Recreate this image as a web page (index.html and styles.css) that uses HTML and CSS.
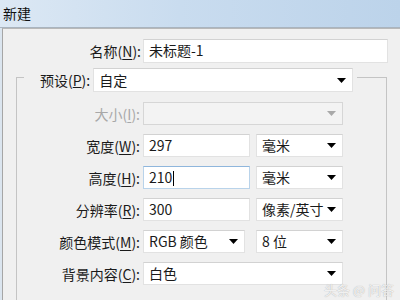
FILE: index.html
```html
<!DOCTYPE html>
<html lang="zh-CN">
<head>
    <meta charset="UTF-8">
    <title>新建</title>
    <link rel="stylesheet" href="styles.css">
</head>
<body>
    <div class="titlebar">新建</div>
    <div class="client">
        <div class="name-row">
            <label class="label">名称(<u>N</u>):</label>
            <div class="field name-field">未标题-1</div>
        </div>

        <fieldset class="group">
            <legend class="preset">
                <label class="preset-label">预设(<u>P</u>):</label>
                <div class="field combo preset-combo">自定<svg class="arrow" width="9" height="5"><path d="M0 0h9L4.5 5z"/></svg></div>
            </legend>

            <div class="row">
                <label class="label disabled">大小(<u>I</u>):</label>
                <div class="field combo wide off"><svg class="arrow" width="9" height="5"><path d="M0 0h9L4.5 5z"/></svg></div>
            </div>
            <div class="row">
                <label class="label">宽度(<u>W</u>):</label>
                <div class="field num">297</div>
                <div class="field combo unit">毫米<svg class="arrow" width="9" height="5"><path d="M0 0h9L4.5 5z"/></svg></div>
            </div>
            <div class="row">
                <label class="label">高度(<u>H</u>):</label>
                <div class="field num focus">210<span class="caret"></span></div>
                <div class="field combo unit">毫米<svg class="arrow" width="9" height="5"><path d="M0 0h9L4.5 5z"/></svg></div>
            </div>
            <div class="row">
                <label class="label">分辨率(<u>R</u>):</label>
                <div class="field num">300</div>
                <div class="field combo unit">像素/英寸<svg class="arrow" width="9" height="5"><path d="M0 0h9L4.5 5z"/></svg></div>
            </div>
            <div class="row">
                <label class="label">颜色模式(<u>M</u>):</label>
                <div class="field combo mode">RGB 颜色<svg class="arrow" width="9" height="5"><path d="M0 0h9L4.5 5z"/></svg></div>
                <div class="field combo unit">8 位<svg class="arrow" width="9" height="5"><path d="M0 0h9L4.5 5z"/></svg></div>
            </div>
            <div class="row">
                <label class="label">背景内容(<u>C</u>):</label>
                <div class="field combo wide">白色<svg class="arrow" width="9" height="5"><path d="M0 0h9L4.5 5z"/></svg></div>
            </div>
        </fieldset>
    </div>
    <div class="watermark">头条 @ 问答</div>
</body>
</html>
```

FILE: styles.css
```css
body {
    margin: 0;
    width: 400px;
    height: 300px;
    overflow: hidden;
    background: #dbe5ef;
    font-family: "Noto Sans CJK SC", "Noto Sans", sans-serif;
    font-size: 14px;
    color: #1a1a1a;
    position: relative;
}

.titlebar {
    height: 27px;
    line-height: 26px;
    padding-left: 3px;
    background: linear-gradient(90deg, #dce8f4 0%, #c9dcef 45%, #bcd3ea 100%);
    color: #111;
    border-bottom: 1px solid #a9b4bf;
}

.client {
    margin-left: 2px;
    height: 272px;
    background: #f0f0f0;
    border-left: 1px solid #a6a6a6;
    border-top: 1px solid #b8b8b8;
}

.name-row {
    display: flex;
    align-items: center;
    padding-top: 10px;
}

.name-row .label {
    width: 138px;
    margin-right: 2px;
}

.label {
    text-align: right;
    white-space: nowrap;
    line-height: 20px;
}

.label u {
    text-decoration-thickness: 1px;
    text-underline-offset: 2px;
}

.label.disabled {
    color: #a8a8a8;
}

.field {
    box-sizing: border-box;
    height: 23px;
    line-height: 21px;
    padding-left: 5px;
    background: #fff;
    border: 1px solid #e2e2e2;
    border-top-color: #d2d2d2;
    white-space: nowrap;
}

.name-field {
    width: 245px;
    height: 24px;
}

.group {
    margin: -1px 0 0 13px;
    width: 371px;
    box-sizing: border-box;
    height: 240px;
    padding: 10px 0 0 0;
    border: 1px solid #c4c4c4;
}

.preset {
    display: flex;
    align-items: center;
    margin-left: 7px;
    padding: 6px 4px 0 16px;
}

.preset-label {
    margin-right: 3px;
    line-height: 20px;
}

.preset-combo {
    width: 260px;
    height: 24px;
}

.combo {
    display: flex;
    align-items: center;
    padding-right: 6px;
}

.arrow {
    flex: none;
    margin-left: auto;
    fill: #000;
}

.row {
    display: flex;
    align-items: center;
    gap: 6px;
    margin-bottom: 9px;
}

.row .label {
    width: 123px;
    margin-right: -3px;
}

.num {
    width: 107px;
}

.unit {
    width: 87px;
}

.mode {
    width: 102px;
    margin-right: 5px;
}

.wide {
    width: 200px;
}

.off {
    background: #f3f3f3;
    border-color: #d6d6d6;
}

.off .arrow {
    fill: #a9a9a9;
}

.focus {
    border-color: #b9d3ea;
    border-top-color: #8fb6dc;
}

.caret {
    display: inline-block;
    width: 1px;
    height: 15px;
    margin-left: 1px;
    vertical-align: -3px;
    background: #000;
}

.watermark {
    position: absolute;
    right: 6px;
    bottom: 1px;
    font-size: 13px;
    color: rgba(255, 255, 255, 0.85);
    text-shadow: 0 0 1px #9a9a9a;
}
```
